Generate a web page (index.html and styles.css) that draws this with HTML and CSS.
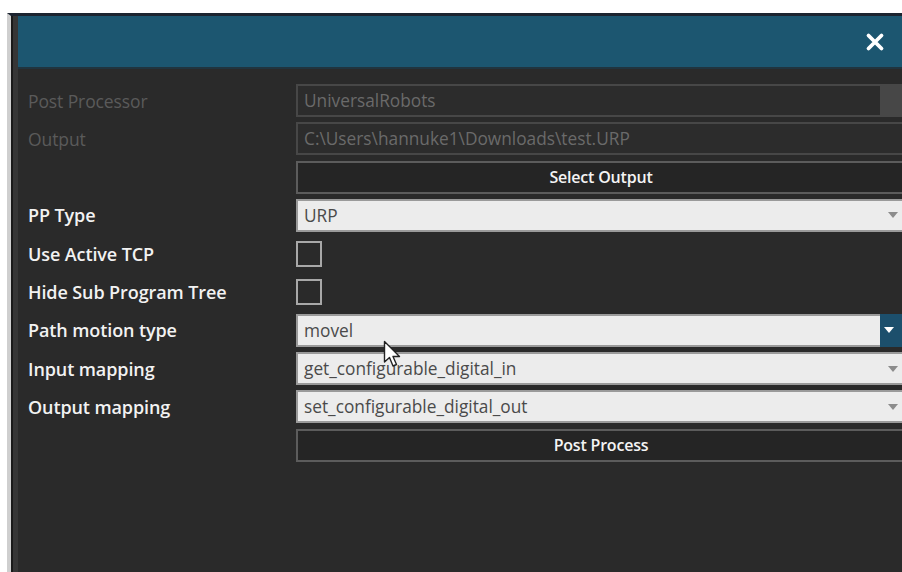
FILE: index.html
```html
<!DOCTYPE html>
<html>
<head>
<meta charset="utf-8">
<title>Post Processor Settings</title>
<link rel="stylesheet" href="styles.css">
</head>
<body>
<div class="page">
  <div class="window">
    <div class="titlebar">
      <button class="close" aria-label="Close">
        <svg width="20" height="20" viewBox="0 0 20 20"><path d="M3.5 3.5 L16.5 16.5 M16.5 3.5 L3.5 16.5" stroke="#ffffff" stroke-width="3.8" stroke-linecap="round"/></svg>
      </button>
    </div>
    <div class="form">
      <div class="label dim">Post Processor</div>
      <div class="field disabled"><span>UniversalRobots</span><span class="drop grey"></span></div>

      <div class="label dim">Output</div>
      <div class="field disabled"><span>C:\Users\hannuke1\Downloads\test.URP</span></div>

      <div class="label"></div>
      <button class="btn">Select Output</button>

      <div class="label">PP Type</div>
      <div class="field light"><span>URP</span><span class="arrow"></span></div>

      <div class="label">Use Active TCP</div>
      <div class="check-cell"><span class="check"></span></div>

      <div class="label">Hide Sub Program Tree</div>
      <div class="check-cell"><span class="check"></span></div>

      <div class="label">Path motion type</div>
      <div class="field light active"><span>movel</span><span class="drop blue"><span class="arrow white"></span></span></div>

      <div class="label">Input mapping</div>
      <div class="field light"><span>get_configurable_digital_in</span><span class="arrow"></span></div>

      <div class="label">Output mapping</div>
      <div class="field light"><span>set_configurable_digital_out</span><span class="arrow"></span></div>

      <div class="label"></div>
      <button class="btn">Post Process</button>
    </div>
  </div>
  <svg class="cursor" width="20" height="30" viewBox="0 0 20 30"><path d="M1.5 1.5 L1.5 22 L6.5 17.5 L10 26 L13.5 24.5 L10 16.5 L16.5 16.5 Z" fill="#ffffff" stroke="#222222" stroke-width="1.4" stroke-linejoin="round"/></svg>
</div>
</body>
</html>
```

FILE: styles.css
```css
html, body {
  margin: 0;
  padding: 0;
  background: #ffffff;
  height: 100%;
  overflow: hidden;
}

.page {
  position: relative;
  padding: 13px 0 0 7px;
  height: 100%;
  box-sizing: border-box;
  font-family: "Open Sans", "Noto Sans", sans-serif;
}

.window {
  height: 100%;
  background: #2a2a2a;
  border-left: 4px solid #cfcfcf;
  box-shadow: inset 2px 0 0 #1a1a1a, inset 7px 0 0 #363636;
  border-top: 3px solid #1c2430;
  box-sizing: border-box;
  overflow: hidden;
}

.titlebar {
  height: 51px;
  background: #1c5670;
  border-bottom: 2px solid #20343f;
  display: flex;
  align-items: center;
  justify-content: flex-end;
  padding-right: 17px;
  margin-left: 7px;
}

.close {
  background: none;
  border: 0;
  padding: 0;
  width: 20px;
  height: 20px;
  display: block;
}
.close svg { display: block; }

.form {
  display: grid;
  grid-template-columns: 268px 1fr;
  row-gap: 5.3px;
  padding: 15px 0 0 17px;
  margin-right: -4px;
  grid-auto-rows: 33px;
}

.label {
  font-size: 18px;
  font-weight: 600;
  color: #f2f2f2;
  display: flex;
  align-items: center;
  letter-spacing: -0.1px;
  white-space: nowrap;
}
.label.dim {
  color: #5a5a5a;
  font-weight: 400;
  font-size: 17.5px;
}

.field {
  display: flex;
  align-items: center;
  justify-content: space-between;
  box-sizing: border-box;
  font-size: 17.3px;
  padding-left: 6px;
  letter-spacing: 0;
  white-space: nowrap;
}
.field.disabled {
  background: #2c2c2c;
  border: 2px solid #474747;
  color: #6a6a6a;
}
.field.light {
  background: #ececec;
  border: 2px solid #9a9a9a;
  border-right: 0;
  color: #4a4a4a;
  padding-right: 4px;
}

.drop {
  align-self: stretch;
  width: 22px;
  display: flex;
  align-items: center;
  justify-content: center;
}
.drop.grey { background: #474747; margin: -2px 2px -2px 0; }
.drop.blue { background: #1c4f6c; margin: -2px 0 -2px 0; }

.arrow {
  width: 0;
  height: 0;
  border-left: 5px solid transparent;
  border-right: 5px solid transparent;
  border-top: 6px solid #8c8c8c;
  margin-right: 4px;
}
.arrow.white { border-top-color: #ffffff; margin: 0 4px 0 0; }

.btn {
  background: #252525;
  border: 2px solid #5c5c5c;
  color: #f4f4f4;
  font-family: inherit;
  font-size: 16px;
  font-weight: 600;
  letter-spacing: -0.2px;
  padding: 0;
}

.check-cell {
  display: flex;
  align-items: center;
}
.check {
  width: 26px;
  height: 26px;
  border: 2px solid #a8a8a8;
  box-sizing: border-box;
}

.cursor {
  position: absolute;
  left: 383px;
  top: 340px;
}
```
